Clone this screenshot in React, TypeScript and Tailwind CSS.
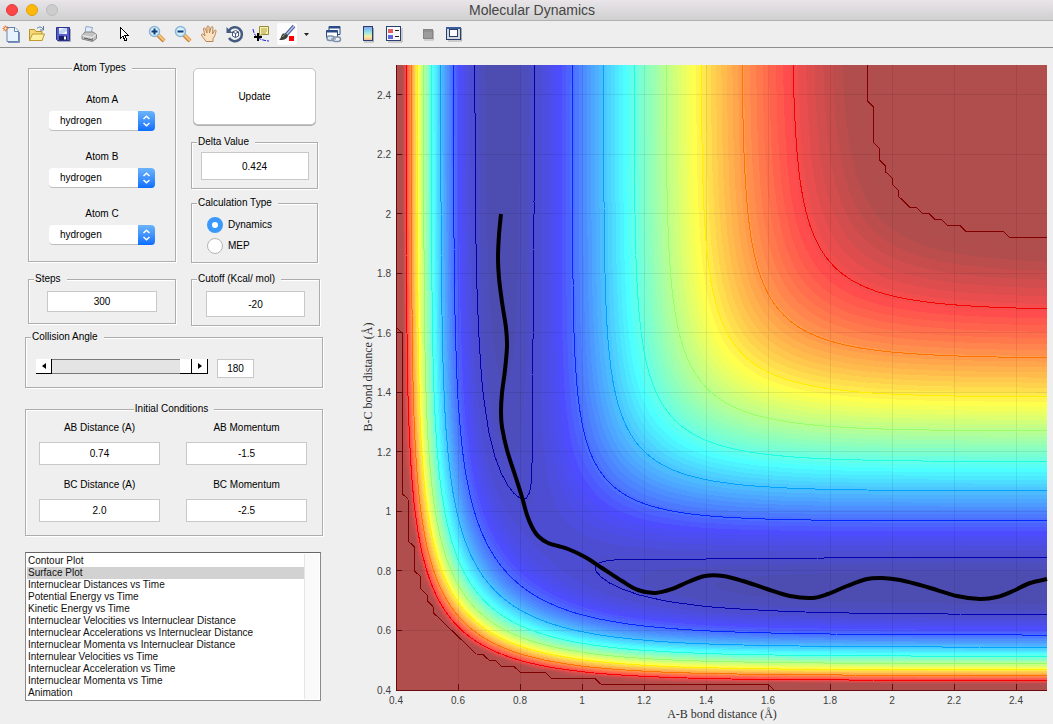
import React, { useMemo, useState } from "react";

/* ---------- potential energy surface (collinear LEPS) ---------- */

const DEPTH = 103.8;
const BETA = 1.98;
const R_EQ = 0.741;
const SATO = 0.183;
const CUTOFF = -20;

const R_MIN = 0.4;
const STEP = 0.02;
const NODES = 106;

const LEFT = 41;
const RIGHT = 692;
const TOP = 17;
const BOTTOM = 642;

const px = (r: number) => LEFT + ((r - R_MIN) / 2.1) * (RIGHT - LEFT);
const py = (r: number) => BOTTOM - ((r - R_MIN) / 2.1) * (BOTTOM - TOP);

const energy = (ab: number, bc: number) => {
  const f = DEPTH / (4 * (1 + SATO));
  let q = 0;
  const j = [ab, bc, ab + bc].map((r) => {
    const e = Math.exp(-BETA * (r - R_EQ));
    q += f * ((3 + SATO) * e * e - (2 + 6 * SATO) * e);
    return f * ((1 + 3 * SATO) * e * e - (6 + 2 * SATO) * e);
  });
  const s = (j[0] - j[1]) ** 2 + (j[1] - j[2]) ** 2 + (j[2] - j[0]) ** 2;
  return Math.min(CUTOFF, q - Math.sqrt(s / 2));
};

const jet = (u: number, white: number) => {
  const part = (c: number) => {
    const v = Math.max(0, Math.min(1, 1.5 - Math.abs(4 * u - c)));
    return Math.round((v * (1 - white) + white) * 255);
  };
  return `rgb(${part(3)},${part(2)},${part(1)})`;
};

type Point = [number, number];

const buildSurface = () => {
  const z: number[][] = [];
  let low = 0;
  for (let i = 0; i < NODES; i++) {
    z.push([]);
    for (let k = 0; k < NODES; k++) {
      const v = energy(R_MIN + k * STEP, R_MIN + i * STEP);
      z[i].push(v);
      low = Math.min(low, v);
    }
  }

  // walks round one grid cell and keeps the part that lies above the level
  const clipCell = (i: number, k: number, level: number) => {
    const corners = [
      [k, i],
      [k + 1, i],
      [k + 1, i + 1],
      [k, i + 1],
    ];
    const area: Point[] = [];
    const cuts: Point[] = [];
    corners.forEach(([cx, cy], n) => {
      const [nx, ny] = corners[(n + 1) % 4];
      const a = z[cy][cx];
      const b = z[ny][nx];
      if (a >= level) area.push([cx, cy]);
      if (a >= level !== b >= level) {
        const t = (level - a) / (b - a);
        const p: Point = [cx + (nx - cx) * t, cy + (ny - cy) * t];
        area.push(p);
        cuts.push(p);
      }
    });
    return { area, cuts };
  };

  const at = ([gx, gy]: Point) =>
    `${px(R_MIN + gx * STEP).toFixed(1)} ${py(R_MIN + gy * STEP).toFixed(1)}`;

  const bands: { d: string; fill: string }[] = [];
  for (let n = 1; n < 64; n++) {
    const level = low + ((CUTOFF - low) * n) / 64;
    const d: string[] = [];
    for (let i = 0; i < NODES - 1; i++) {
      let start = -1;
      for (let k = 0; k < NODES; k++) {
        const full =
          k < NODES - 1 &&
          z[i][k] >= level &&
          z[i][k + 1] >= level &&
          z[i + 1][k] >= level &&
          z[i + 1][k + 1] >= level;
        if (full) {
          if (start < 0) start = k;
          continue;
        }
        if (start >= 0) {
          d.push(
            `M${at([start, i])}L${at([k, i])}L${at([k, i + 1])}L${at([start, i + 1])}Z`
          );
          start = -1;
        }
        if (k < NODES - 1) {
          const { area } = clipCell(i, k, level);
          if (area.length > 2) d.push("M" + area.map(at).join("L") + "Z");
        }
      }
    }
    bands.push({ d: d.join(""), fill: jet(Math.min(0.986, (n + 1) / 64), 0.3) });
  }

  const lines: { d: string; stroke: string }[] = [];
  for (let level = -100; level <= CUTOFF; level += 10) {
    const d: string[] = [];
    for (let i = 0; i < NODES - 1; i++) {
      for (let k = 0; k < NODES - 1; k++) {
        const { cuts } = clipCell(i, k, level);
        for (let c = 0; c + 1 < cuts.length; c += 2) {
          d.push(`M${at(cuts[c])}L${at(cuts[c + 1])}`);
        }
      }
    }
    lines.push({
      d: d.join(""),
      stroke: jet((level - low) / (CUTOFF - low), 0),
    });
  }
  return { bands, lines };
};

/* ---------- trajectory ---------- */

const TRACK: Point[] = [
  [146, 166], [144, 187], [143, 210], [144, 230], [147, 254], [151, 280],
  [152, 298], [150, 322], [147, 345], [146, 363], [147, 379], [152, 402],
  [160, 427], [167, 449], [172, 467], [177, 479], [183, 488], [193, 495],
  [213, 501], [230, 509], [247, 520], [267, 533], [283, 542], [300, 545],
  [317, 541], [333, 534], [350, 528], [368, 528], [388, 533], [412, 541],
  [435, 548], [457, 550], [473, 546], [492, 538], [512, 531], [527, 530],
  [545, 532], [572, 539], [602, 548], [625, 551], [642, 549], [658, 543],
  [675, 535], [692, 531],
];

const smooth = (pts: Point[]) => {
  let d = `M${pts[0].join(" ")}`;
  for (let i = 0; i < pts.length - 1; i++) {
    const a = pts[i - 1] ?? pts[i];
    const b = pts[i];
    const c = pts[i + 1];
    const e = pts[i + 2] ?? c;
    d += `C${b[0] + (c[0] - a[0]) / 6} ${b[1] + (c[1] - a[1]) / 6} ${
      c[0] - (e[0] - b[0]) / 6
    } ${c[1] - (e[1] - b[1]) / 6} ${c[0]} ${c[1]}`;
  }
  return d;
};

const TICKS = [0.4, 0.6, 0.8, 1, 1.2, 1.4, 1.6, 1.8, 2, 2.2, 2.4];

const SurfacePlot: React.FC = () => {
  const { bands, lines } = useMemo(buildSurface, []);
  return (
    <svg viewBox="0 0 698 676" className="block w-full h-auto" role="img" aria-label="Surface plot">
      <g shapeRendering="crispEdges">
        <rect x={LEFT} y={TOP} width={RIGHT - LEFT} height={BOTTOM - TOP} fill={jet(1 / 64, 0.3)} />
        {bands.map((b, i) => (
          <path key={i} d={b.d} fill={b.fill} />
        ))}
        {TICKS.slice(1).map((t) => (
          <path
            key={t}
            d={`M${px(t)} ${TOP}V${BOTTOM}M${LEFT} ${py(t)}H${RIGHT}`}
            stroke="#000"
            strokeOpacity={0.08}
          />
        ))}
        {lines.map((l, i) => (
          <path key={i} d={l.d} stroke={l.stroke} fill="none" />
        ))}
        <path d={`M${LEFT} ${TOP}V${BOTTOM}H${RIGHT}`} stroke="#6b0a0a" fill="none" />
        {TICKS.slice(1).map((t) => (
          <path
            key={t}
            d={`M${px(t)} ${BOTTOM}v-6M${LEFT} ${py(t)}h6`}
            stroke="#5c0c0c"
          />
        ))}
      </g>
      <path d={smooth(TRACK)} fill="none" stroke="#000" strokeWidth={4} />
      <g className="font-['Liberation_Sans',Arial,sans-serif] text-[10px]" fill="#404040">
        {TICKS.map((t) => (
          <text key={t} x={px(t)} y={656} textAnchor="middle">
            {t}
          </text>
        ))}
        {TICKS.map((t) => (
          <text key={t} x={36} y={py(t) + 4} textAnchor="end">
            {t}
          </text>
        ))}
      </g>
      <g
        className="font-['Liberation_Serif','Times_New_Roman',serif] text-[12px]"
        fill="#303030"
        textAnchor="middle"
      >
        <text x={367} y={670}>A-B bond distance (Å)</text>
        <text transform="translate(17 329) rotate(-90)">B-C bond distance (Å)</text>
      </g>
    </svg>
  );
};

/* ---------- toolbar ---------- */

const Tool: React.FC<{ label: string; className?: string; children: React.ReactNode }> = ({
  label,
  className = "",
  children,
}) => (
  <button
    type="button"
    aria-label={label}
    className={`w-[26px] h-[26px] flex items-center justify-center ${className}`}
  >
    <svg width="20" height="20" viewBox="0 0 20 20" fill="none">
      {children}
    </svg>
  </button>
);

const Magnifier: React.FC<{ plus?: boolean }> = ({ plus }) => (
  <>
    <path d="M11 11l6 6" stroke="#c9822f" strokeWidth="4" />
    <path d="M11 10.5l6 6" stroke="#f8c27a" strokeWidth="2.4" />
    <circle cx="7.5" cy="7.5" r="5" fill="#d5f0fb" stroke="#8db6d6" strokeWidth="1.5" />
    <path d={plus ? "M4.5 7.5h6M7.5 4.5v6" : "M4.5 7.5h6"} stroke="#123a78" strokeWidth="2" />
  </>
);

const Toolbar: React.FC = () => (
  <div className="flex items-center h-[27px] bg-[#eeeeee] border-b border-[#8e8e8e]">
    <Tool label="New Figure" className="-ml-[2px]">
      <path d="M6 3.5h8l3.5 3.5v10.5H6z" fill="#e8f3fd" stroke="#6683b0" />
      <path d="M13.5 3.5v4h4" fill="#fff" stroke="#6683b0" />
      <path d="M18.5 8v10.5H7" stroke="#7d92b4" />
      <path d="M4.5 1v7M1 4.5h7M2 2l5 5M7 2L2 7" stroke="#f0b48c" />
      <circle cx="4.5" cy="4.5" r="1.7" fill="#fff3c0" stroke="#d0582c" />
    </Tool>
    <Tool label="Open File">
      <path d="M2.5 16.5v-11h5l1.5 2h6v9z" fill="#f3d873" stroke="#b8932c" />
      <path d="M2.5 16.5l3-6.5h12l-2.5 6.5z" fill="#fdf0a0" stroke="#c09a30" />
      <path d="M10 4.5c2-2 4.5-2 6 .5M16.5 2v4h-3.5" stroke="#56789a" />
    </Tool>
    <Tool label="Save Figure">
      <path d="M17.5 5v12.5H5" stroke="#a8a8b8" />
      <path d="M3.5 3.5h13v13h-12l-1-1z" fill="#555ecb" stroke="#2c3190" />
      <rect x="6" y="4" width="8" height="6" fill="#f2f6fd" />
      <path d="M6 7L11 4h3v3l-5 3H6z" fill="#c3d4f2" />
      <rect x="6" y="12" width="8" height="4" fill="#1b1f5d" />
      <rect x="11" y="12.5" width="2" height="3" fill="#fff" />
    </Tool>
    <Tool label="Print Figure">
      <path d="M6 9l1-6.5 6.5 1L12 9z" fill="#e4eefb" stroke="#8fa5c6" />
      <path d="M3 11.5L6 8h8l3.5 2.5v4l-4 3-10.5-2.5z" fill="#c4c4c4" stroke="#858585" />
      <path d="M3.5 11.5l9.5 2 4-3" stroke="#f2f2f2" />
      <path d="M5 14l8 2" stroke="#555" />
      <path d="M13.5 14v3" stroke="#858585" />
    </Tool>
    <Tool label="Edit Plot" className="ml-[9px]">
      <path
        d="M6.5 3.5v11l2.5-2.5 2 5 2-1-2-4.5h3.5z"
        fill="#fff"
        stroke="#000"
        shapeRendering="crispEdges"
      />
    </Tool>
    <Tool label="Zoom In" className="ml-[7px]">
      <Magnifier plus />
    </Tool>
    <Tool label="Zoom Out">
      <Magnifier />
    </Tool>
    <Tool label="Pan">
      <path
        d="M7 17.5c-1-2-3.5-4-4.5-6.5 0-1.5 1.5-1.5 2.5 0l1 1L4.5 5c0-1.5 1.5-1.5 2 0l1.5 4L8 3c0-1.5 2-1.5 2 0l.5 6L12 3.5c.5-1.5 2-1 2 .5L13.5 10l2-3.5c1-1 2 0 1.5 1-1 3-1 5-3 7v3z"
        fill="#fde3c6"
        stroke="#b98552"
      />
    </Tool>
    <Tool label="Rotate 3D">
      <path d="M4 6.5A7 7 0 1 1 4 14" stroke="#465a80" strokeWidth="2.5" />
      <path d="M1.5 3v6h6z" fill="#465a80" />
      <path d="M7.5 8l3-1.5 3 1.5v4l-3 1.5-3-1.5zM7.5 8l3 1.5 3-1.5M10.5 9.5v4" fill="#fff" stroke="#465a80" />
    </Tool>
    <Tool label="Data Cursor">
      <path d="M2 5c1 6 4 11 16 12" stroke="#2222dd" strokeDasharray="4 1" />
      <path d="M8.5 2.5h9v8h-6l-3 1z" fill="#faf3a8" stroke="#958a3a" />
      <path d="M10 5h6M10 7h6M10 9h5" stroke="#b0a050" />
      <path d="M7 9v8M3 13h8" stroke="#000" strokeWidth="2" />
    </Tool>
    <button
      type="button"
      aria-label="Brush"
      className="w-[20px] h-[22px] mx-[3px] flex items-center justify-center bg-[#fcfcfc] rounded-[2px]"
    >
      <svg width="20" height="20" viewBox="0 0 20 20" fill="none">
        <path d="M17 2L9 11" stroke="#4a5a8c" strokeWidth="3.5" />
        <path d="M17 2L9.5 10.5" stroke="#b4c4ee" strokeWidth="1.5" />
        <path d="M9 9.5l2 2c-1 4-5 5-9 4.5 2-1 2-5 4-6.5z" fill="#3c403c" />
        <path d="M5.5 13c1-2 2-2.5 3-2.5" stroke="#9ca49c" />
        <rect x="12" y="12" width="5" height="5" fill="#f00" />
      </svg>
    </button>
    <button type="button" aria-label="Brush colours" className="w-[13px] h-[26px] flex items-center justify-center">
      <svg width="5" height="3" viewBox="0 0 5 3">
        <path d="M0 0h5L2.5 3z" fill="#222" />
      </svg>
    </button>
    <Tool label="Link Plot" className="ml-[7px]">
      <path d="M6 2.5h11v8H6z" fill="#f4f7fd" stroke="#2c4a86" />
      <path d="M6 3.5h11" stroke="#2c4a86" strokeWidth="2" />
      <path d="M3.5 6.5h11v7h-11z" fill="#fff" stroke="#2c4a86" />
      <path d="M3.5 7.5h11" stroke="#2c4a86" strokeWidth="2" />
      <rect x="4" y="12" width="7" height="4.5" rx="2.2" fill="#dfe6ee" stroke="#7d91aa" strokeWidth="1.5" />
      <rect x="10" y="13" width="7.5" height="4.5" rx="2.2" fill="#eef2f6" stroke="#7d91aa" strokeWidth="1.5" />
      <path d="M8 15h5" stroke="#8fa2b8" strokeWidth="1.5" />
    </Tool>
    <Tool label="Insert Colorbar" className="ml-[9px]">
      <defs>
        <linearGradient id="colorbar" x1="0" y1="0" x2="0" y2="1">
          <stop offset="0" stopColor="#8a9cf0" />
          <stop offset="0.4" stopColor="#8fe3ee" />
          <stop offset="0.7" stopColor="#f5f0a0" />
          <stop offset="1" stopColor="#f0b49c" />
        </linearGradient>
      </defs>
      <path d="M15.5 4v14H6" stroke="#a8a8a8" />
      <rect x="5.5" y="2.5" width="9" height="14" fill="url(#colorbar)" stroke="#27406f" />
    </Tool>
    <Tool label="Insert Legend">
      <path d="M18 4v14H4" stroke="#a8a8a8" />
      <rect x="2.5" y="2.5" width="14" height="14" fill="#f7f9fd" stroke="#27406f" />
      <rect x="4" y="5" width="5" height="4" fill="#e06060" />
      <rect x="4" y="11" width="5" height="4" fill="#6464e0" />
      <path d="M11 6.5h4M11 12.5h4" stroke="#222" />
    </Tool>
    <Tool label="Hide Plot Tools" className="ml-[8px]">
      <path d="M15.5 6.5v9.5H6" stroke="#b4b4b4" />
      <rect x="5.5" y="5.5" width="9" height="9" fill="#9c9c9c" stroke="#848484" />
      <path d="M5 7h10" stroke="#848484" />
    </Tool>
    <Tool label="Show Plot Tools">
      <path d="M17.5 4v13H4" stroke="#a8a8a8" />
      <rect x="2.5" y="3.5" width="14" height="12" fill="#d4d8de" stroke="#27406f" />
      <path d="M2 4h15" stroke="#3c5c9c" strokeWidth="2" />
      <rect x="5.5" y="5.5" width="8" height="7" fill="#fff" stroke="#27406f" />
    </Tool>
  </div>
);

/* ---------- form pieces ---------- */

const Panel: React.FC<{
  title: string;
  className?: string;
  legendClass?: string;
  children: React.ReactNode;
}> = ({ title, className = "", legendClass = "ml-[5px]", children }) => (
  <fieldset
    className={`min-w-0 border border-[#adadad] shadow-[1px_1px_0_#fff,inset_1px_1px_0_#fff] ${className}`}
  >
    <legend className={`h-[14px] leading-[14px] pl-[1px] pr-[6px] bg-[#efefef] ${legendClass}`}>
      {title}
    </legend>
    {children}
  </fieldset>
);

const Field: React.FC<{ value: string; label?: string; id?: string; className: string }> = ({
  value,
  label,
  id,
  className,
}) => {
  const [text, setText] = useState(value);
  return (
    <input
      type="text"
      id={id}
      aria-label={label}
      value={text}
      onChange={(e) => setText(e.target.value)}
      className={`block min-w-0 bg-white border border-[#c8c8c8] text-center outline-none ${className}`}
    />
  );
};

const AtomSelect: React.FC<{ name: string }> = ({ name }) => {
  const id = name.replace(" ", "-").toLowerCase();
  return (
    <div className="flex flex-col items-center gap-[4px]">
      <label htmlFor={id} className="leading-[14px]">
        {name}
      </label>
      <div className="relative w-[106px] h-[20px]">
        <select
          id={id}
          className="appearance-none w-full h-full pl-[11px] bg-white rounded-[4px] border-b border-[#bdbdbd] outline-none"
        >
          <option>hydrogen</option>
          <option>fluorine</option>
          <option>chlorine</option>
        </select>
        <span className="absolute right-0 top-0 w-[17px] h-[20px] rounded-r-[4px] bg-linear-to-b from-[#6cb3fa] to-[#0a6dff] flex items-center justify-center pointer-events-none">
          <svg width="9" height="12" viewBox="0 0 9 12" fill="none" stroke="#fff" strokeWidth="1.5">
            <path d="M1.5 4L4.5 1.2 7.5 4M1.5 8l3 2.8 3-2.8" />
          </svg>
        </span>
      </div>
    </div>
  );
};

const Condition: React.FC<{ name: string; value: string }> = ({ name, value }) => {
  const id = name.replace(/\W+/g, "-").toLowerCase();
  return (
    <div className="flex flex-col items-center gap-[7px]">
      <label htmlFor={id} className="leading-[14px]">
        {name}
      </label>
      <Field id={id} value={value} className="w-full h-[23px]" />
    </div>
  );
};

const PLOTS = [
  "Contour Plot",
  "Surface Plot",
  "Internuclear Distances vs Time",
  "Potential Energy vs Time",
  "Kinetic Energy vs Time",
  "Internuclear Velocities vs Internuclear Distance",
  "Internuclear Accelerations vs Internuclear Distance",
  "Internuclear Momenta vs Internuclear Distance",
  "Internulear Velocities vs Time",
  "Internuclear Acceleration vs Time",
  "Internuclear Momenta vs Time",
  "Animation",
];

const Controls: React.FC = () => {
  const [calc, setCalc] = useState("Dynamics");
  const [angle, setAngle] = useState(180);
  const [plot, setPlot] = useState("Surface Plot");
  return (
    <form className="w-[355px] shrink-0 pl-[25px] pr-[32px] pt-[13px]" onSubmit={(e) => e.preventDefault()}>
      <div className="flex items-start gap-[15px] pl-[3px]">
        <Panel title="Atom Types" className="w-[148px] pb-[16px]" legendClass="mx-auto">
          <div className="flex flex-col gap-[19px] pt-[18px]">
            <AtomSelect name="Atom A" />
            <AtomSelect name="Atom B" />
            <AtomSelect name="Atom C" />
          </div>
        </Panel>
        <div className="w-[127px]">
          <button
            type="submit"
            className="block w-[123px] h-[57px] mt-[7px] mx-auto bg-white border border-[#c4c4c4] rounded-[5px] shadow-[0_1px_0_#b0b0b0]"
          >
            Update
          </button>
          <Panel title="Delta Value" className="mt-[10px] pt-[3px] pb-[8px]">
            <Field label="Delta Value" value="0.424" className="w-[108px] h-[28px] mx-auto" />
          </Panel>
          <Panel title="Calculation Type" className="mt-[7px] pt-[4px] pb-[6px]">
            {["Dynamics", "MEP"].map((name) => (
              <label key={name} className="flex items-center gap-[5px] h-[21px] pl-[15px]">
                <input
                  type="radio"
                  name="calculation"
                  checked={calc === name}
                  onChange={() => setCalc(name)}
                  className="appearance-none w-[16px] h-[16px] rounded-full bg-white border border-[#b4b4b4] checked:border-[5px] checked:border-[#3b99fc]"
                />
                {name}
              </label>
            ))}
          </Panel>
        </div>
      </div>

      <div className="flex items-start gap-[15px] pl-[3px] mt-[9px]">
        <Panel title="Steps" className="w-[148px] pt-[5px] pb-[11px]">
          <Field label="Steps" value="300" className="w-[110px] h-[21px] mx-auto" />
        </Panel>
        <Panel title="Cutoff (Kcal/ mol)" className="w-[129px] pt-[5px] pb-[8px]">
          <Field label="Cutoff (Kcal/ mol)" value="-20" className="w-[99px] h-[26px] mx-auto" />
        </Panel>
      </div>

      <Panel title="Collision Angle" className="mt-[4px] pt-[15px] pb-[9px]">
        <div className="flex items-start gap-[9px] pl-[10px]">
          <div className="flex h-[15px] w-[172px]">
            <button
              type="button"
              aria-label="Decrease angle"
              onClick={() => setAngle(Math.max(0, angle - 1))}
              className="w-[16px] bg-white border-r border-b border-black flex items-center justify-center"
            >
              <svg width="4" height="6" viewBox="0 0 4 6">
                <path d="M4 0v6L0 3z" />
              </svg>
            </button>
            <input
              type="range"
              aria-label="Collision Angle"
              min={0}
              max={180}
              value={angle}
              onChange={(e) => setAngle(Number(e.target.value))}
              className="appearance-none flex-1 min-w-0 m-0 h-[15px] bg-[#e4e4e4] border-y border-[#7a7a7a] [&::-webkit-slider-thumb]:appearance-none [&::-webkit-slider-thumb]:w-[12px] [&::-webkit-slider-thumb]:h-[15px] [&::-webkit-slider-thumb]:bg-white [&::-webkit-slider-thumb]:border-r [&::-webkit-slider-thumb]:border-b [&::-webkit-slider-thumb]:border-black"
            />
            <button
              type="button"
              aria-label="Increase angle"
              onClick={() => setAngle(Math.min(180, angle + 1))}
              className="w-[16px] bg-white border-r border-b border-black flex items-center justify-center"
            >
              <svg width="4" height="6" viewBox="0 0 4 6">
                <path d="M0 0v6l4-3z" />
              </svg>
            </button>
          </div>
          <Field
            key={angle}
            label="Collision Angle value"
            value={String(angle)}
            className="w-[37px] h-[19px]"
          />
        </div>
      </Panel>

      <Panel
        title="Initial Conditions"
        className="mt-[14px] pt-[5px] pb-[13px] px-[13px]"
        legendClass="mx-auto"
      >
        <div className="grid grid-cols-[121px_121px] gap-x-[26px] gap-y-[13px]">
          <Condition name="AB Distance (A)" value="0.74" />
          <Condition name="AB Momentum" value="-1.5" />
          <Condition name="BC Distance (A)" value="2.0" />
          <Condition name="BC Momentum" value="-2.5" />
        </div>
      </Panel>

      <div className="flex mt-[16px] mr-[2px] h-[149px] p-[1px] bg-white border border-[#8a8a8a] border-t-[#666]">
        <select
          size={12}
          aria-label="Plot"
          value={plot}
          onChange={(e) => setPlot(e.target.value)}
          className="flex-1 min-w-0 h-[145px] pt-[1px] overflow-hidden bg-white outline-none"
        >
          {PLOTS.map((name) => (
            <option
              key={name}
              className="h-[12px] min-h-0 leading-[12px] p-0 pl-[1px] text-[#101010] checked:bg-[#d2d2d2]"
            >
              {name}
            </option>
          ))}
        </select>
        <div className="w-[15px] bg-[#fafafa] border-l border-[#e6e6e6]" />
      </div>
    </form>
  );
};

const App: React.FC = () => (
  <div className="min-h-screen bg-[#efefef] text-black text-[10px] font-['Liberation_Sans',Arial,sans-serif]">
    <header className="flex items-center h-[21px] pl-[6px] gap-[8px] bg-linear-to-b from-[#e9e5e9] to-[#d0d0d0] border-b border-[#b1b1b1]">
      <button type="button" aria-label="Close" className="w-[12px] h-[12px] rounded-full bg-[#fc4648] border border-[#e03a3c]" />
      <button type="button" aria-label="Minimize" className="w-[12px] h-[12px] rounded-full bg-[#fdb90b] border border-[#e0a10a]" />
      <button type="button" aria-label="Zoom" className="w-[12px] h-[12px] rounded-full bg-[#cdcdcd] border border-[#bcbcbc]" />
      <h1 className="flex-1 pr-[55px] text-center text-[14px] leading-[20px] text-[#444]">
        Molecular Dynamics
      </h1>
    </header>
    <Toolbar />
    <main className="flex">
      <Controls />
      <div className="flex-1 min-w-0">
        <SurfacePlot />
      </div>
    </main>
  </div>
);

export default App;
